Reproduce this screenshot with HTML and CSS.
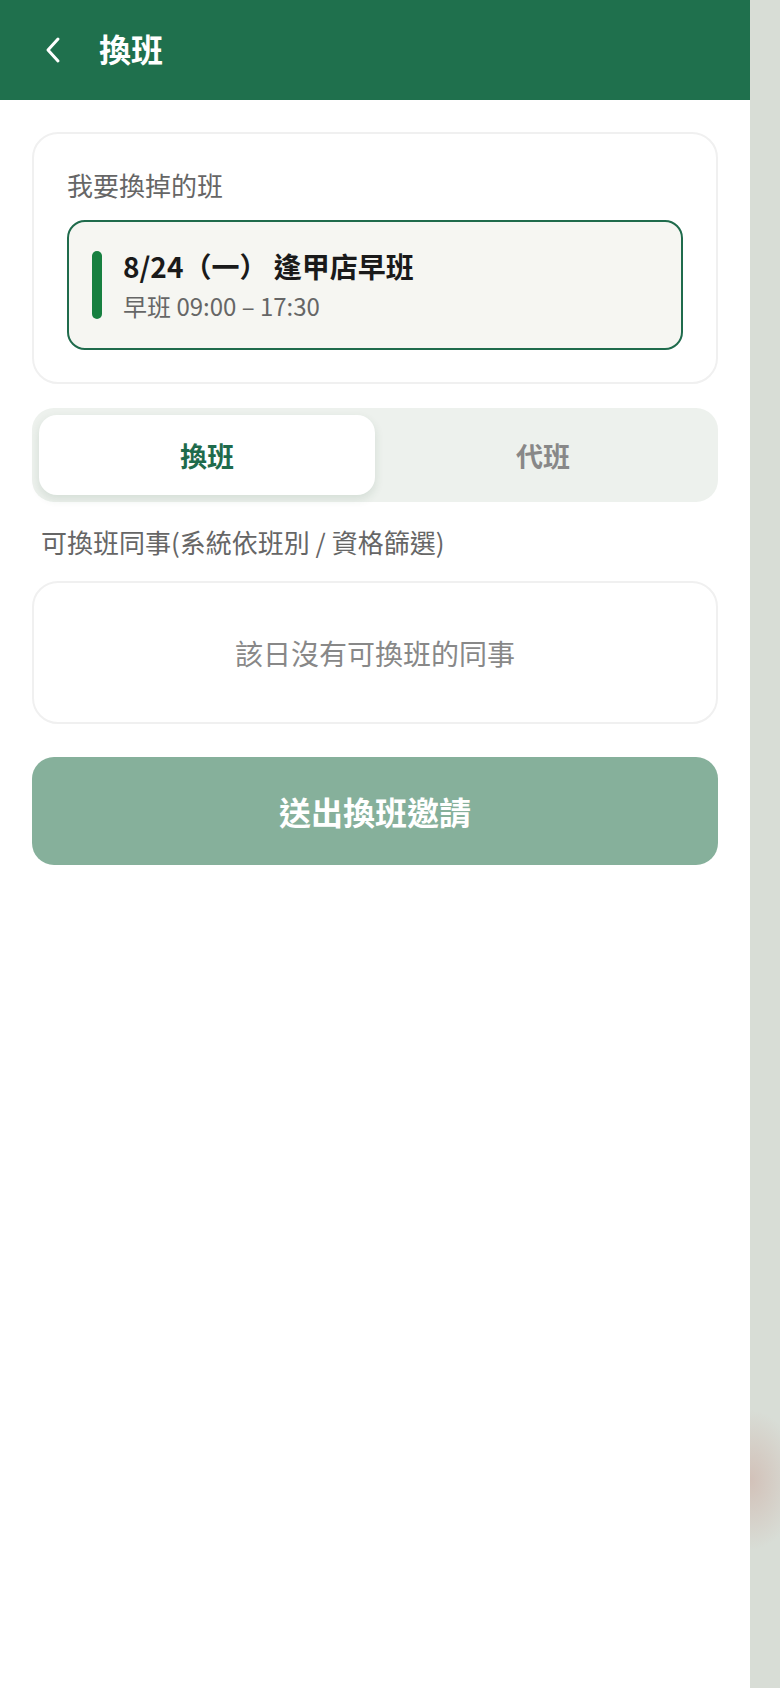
FILE: index.html
```html
<!DOCTYPE html>
<html lang="zh-Hant">
<head>
  <meta charset="UTF-8">
  <title>換班</title>
  <meta name="viewport" content="width=device-width, initial-scale=1.0">
  <link rel="stylesheet" href="styles.css">
</head>
<body>
  <div class="app">
    <header class="topbar">
      <button class="back" aria-label="返回">
        <svg width="18" height="28" viewBox="0 0 18 28"><path d="M14 3 L4 14 L14 25" fill="none" stroke="#fff" stroke-width="3" stroke-linecap="round" stroke-linejoin="round"/></svg>
      </button>
      <h1>換班</h1>
    </header>

    <main class="content">
      <section class="card">
        <div class="card-label">我要換掉的班</div>
        <div class="shift">
          <div class="shift-bar"></div>
          <div class="shift-info">
            <div class="shift-title">8/24（一） 逢甲店早班</div>
            <div class="shift-time">早班 09:00 – 17:30</div>
          </div>
        </div>
      </section>

      <div class="tabs">
        <div class="tab active">換班</div>
        <div class="tab">代班</div>
      </div>

      <div class="section-label">可換班同事(系統依班別 / 資格篩選)</div>

      <section class="card empty">該日沒有可換班的同事</section>

      <button class="submit">送出換班邀請</button>
    </main>
  </div>
  <div class="fab-shadow"></div>
</body>
</html>
```

FILE: styles.css
```css
body {
  margin: 0;
  background: #d8ddd6;
  font-family: "Noto Sans CJK TC", "Noto Sans", sans-serif;
  overflow: hidden;
}
.app {
  position: relative;
  z-index: 1;
  width: 750px;
  min-height: 100vh;
  background: #fff;
}
.topbar {
  height: 100px;
  background: #1f704d;
  display: flex;
  align-items: center;
  padding-left: 38px;
  color: #fff;
}
.back {
  background: none;
  border: 0;
  padding: 0;
  width: 30px;
  height: 40px;
  display: flex;
  align-items: center;
  justify-content: center;
  margin-right: 31px;
}
.topbar h1 {
  margin: 0;
  font-size: 32px;
  font-weight: 700;
  line-height: 1;
  margin-top: -4px;
}
.content {
  padding: 32px 32px;
}
.card {
  border: 2px solid #f0f0f0;
  border-radius: 26px;
  padding: 31px 33px 32px;
}
.card-label {
  font-size: 26px;
  color: #666;
  line-height: 1.5;
  margin-bottom: 16px;
}
.shift {
  display: flex;
  align-items: center;
  border: 2px solid #1f6b4c;
  border-radius: 18px;
  background: #f6f6f2;
  padding: 23px 23px 23px;
}
.shift-bar {
  width: 10px;
  height: 68px;
  border-radius: 5px;
  background: #178040;
  margin-right: 21px;
}
.shift-title {
  font-size: 28px;
  font-weight: 700;
  color: #1a1a1a;
  line-height: 42px;
}
.shift-time {
  font-size: 24px;
  color: #666;
  line-height: 38px;
}
.tabs {
  display: flex;
  margin-top: 24px;
  background: #edf1ed;
  border-radius: 22px;
  padding: 7px;
}
.tab {
  flex: 1;
  height: 80px;
  display: flex;
  align-items: center;
  justify-content: center;
  font-size: 27px;
  font-weight: 700;
  color: #888;
  border-radius: 18px;
}
.tab.active {
  background: #fff;
  color: #1f6b4c;
  box-shadow: 0 4px 10px rgba(30, 80, 50, 0.12);
}
.section-label {
  font-size: 26px;
  color: #666;
  line-height: 1.5;
  padding-left: 9px;
  margin: 20px 0 20px;
}
.empty {
  height: 139px;
  padding: 0;
  display: flex;
  align-items: center;
  justify-content: center;
  font-size: 28px;
  color: #888;
}
.submit {
  display: block;
  width: 100%;
  height: 108px;
  margin-top: 33px;
  border: 0;
  border-radius: 22px;
  background: #86b09b;
  color: #fff;
  font-family: inherit;
  font-size: 32px;
  font-weight: 700;
}
.fab-shadow {
  position: absolute;
  left: 690px;
  top: 1400px;
  width: 120px;
  height: 160px;
  background: radial-gradient(ellipse 50px 70px at 60px 80px, rgba(205, 170, 160, 0.55), rgba(216, 221, 214, 0));
}
```
